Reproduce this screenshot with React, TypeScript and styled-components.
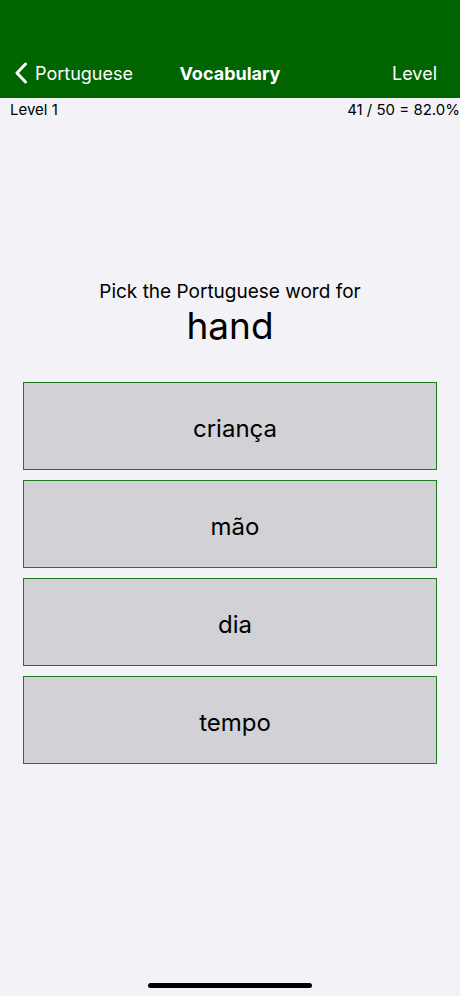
import React from 'react';
import styled, { createGlobalStyle } from 'styled-components';

const GlobalStyle = createGlobalStyle`
  html, body {
    margin: 0;
    padding: 0;
    background: #f2f2f7;
    font-family: Inter, "Noto Sans", sans-serif;
    color: #000;
  }
`;

const Screen = styled.div`
  width: 460px;
  height: 996px;
  display: flex;
  flex-direction: column;
  background: #f2f2f7;
  overflow: hidden;
`;

const Header = styled.header`
  height: 98px;
  background: #006400;
  display: flex;
  align-items: flex-end;
  box-sizing: border-box;
  padding: 0 23px 13px;
  color: #fff;
`;

const NavSide = styled.div<{ $align: 'left' | 'right' }>`
  flex: 1;
  display: flex;
  align-items: center;
  justify-content: ${(p) => (p.$align === 'left' ? 'flex-start' : 'flex-end')};
  gap: 7px;
  font-size: 18px;
  height: 24px;
`;

const BackIcon = styled.svg`
  margin-left: -9px;
`;

const NavTitle = styled.div`
  font-size: 18px;
  font-weight: 700;
  height: 24px;
  display: flex;
  align-items: center;
`;

const StatsRow = styled.div`
  display: flex;
  justify-content: space-between;
  padding: 2px 0 0 10px;
  font-size: 15px;
  height: 18px;
  align-items: center;
`;

const Prompt = styled.div`
  margin-top: 162px;
  text-align: center;
  font-size: 19px;
  line-height: 24px;
`;

const Word = styled.div`
  text-align: center;
  font-size: 37px;
  line-height: 44px;
`;

const Choices = styled.div`
  margin: 34px 23px 0;
  display: flex;
  flex-direction: column;
  gap: 10px;
`;

const Choice = styled.button`
  height: 88px;
  background: #d1d1d6;
  border: 1px solid #1e7a1e;
  font-family: inherit;
  font-size: 24px;
  color: #000;
  padding: 5px 0 0 10px;
`;

const HomeBar = styled.div`
  margin: auto auto 8px;
  width: 164px;
  height: 5px;
  border-radius: 3px;
  background: #000;
`;

const choices = ['criança', 'mão', 'dia', 'tempo'];

export default function App() {
  return (
    <Screen>
      <GlobalStyle />
      <Header>
        <NavSide $align="left">
          <BackIcon width="14" height="22" viewBox="0 0 14 22">
            <path d="M11.5 2 L3 11 L11.5 20" fill="none" stroke="#fff" strokeWidth="3" strokeLinecap="round" strokeLinejoin="round" />
          </BackIcon>
          Portuguese
        </NavSide>
        <NavTitle>Vocabulary</NavTitle>
        <NavSide $align="right">Level</NavSide>
      </Header>
      <StatsRow>
        <span>Level 1</span>
        <span>41 / 50 = 82.0%</span>
      </StatsRow>
      <Prompt>Pick the Portuguese word for</Prompt>
      <Word>hand</Word>
      <Choices>
        {choices.map((c) => (
          <Choice key={c}>{c}</Choice>
        ))}
      </Choices>
      <HomeBar />
    </Screen>
  );
}
